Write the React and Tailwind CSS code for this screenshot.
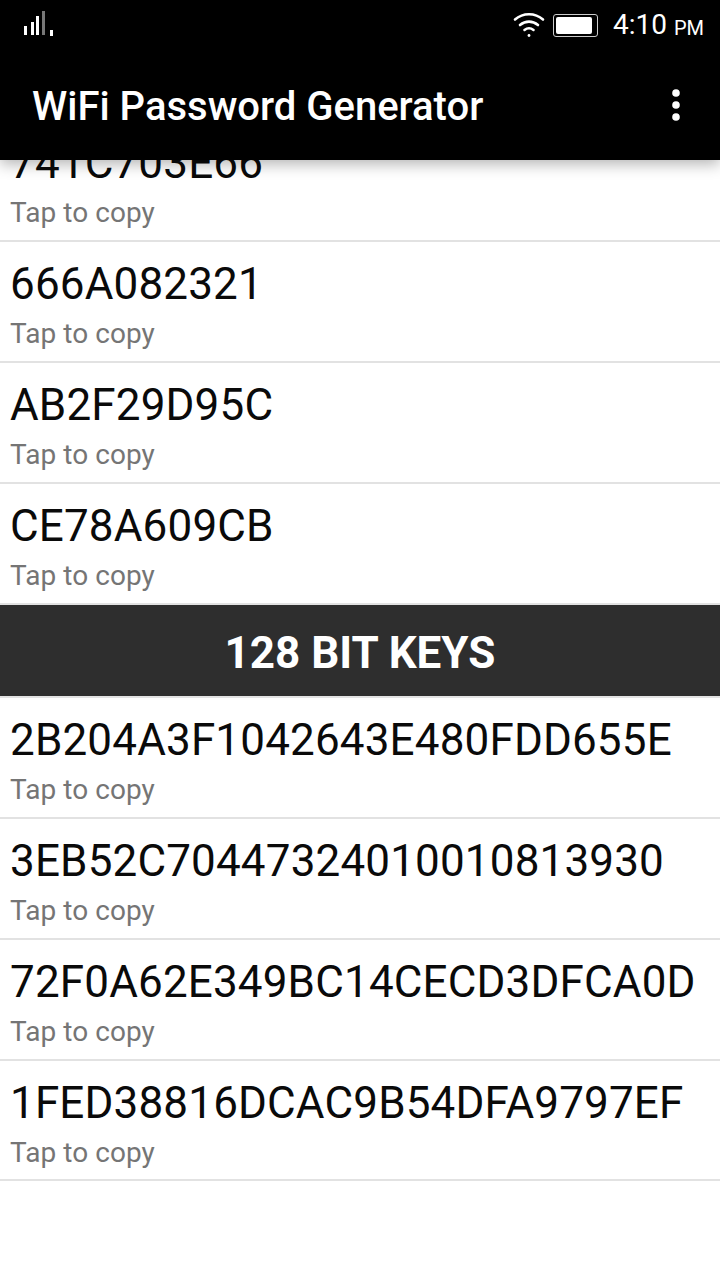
import React from "react";

const topKeys = ["741C703E66", "666A082321", "AB2F29D95C", "CE78A609CB"];
const bottomKeys = [
  "2B204A3F1042643E480FDD655E",
  "3EB52C70447324010010813930",
  "72F0A62E349BC14CECD3DFCA0D",
  "1FED38816DCAC9B54DFA9797EF",
];

const KeyRow = ({ value }) => (
  <div className="h-[121px] last:h-[120px] border-b-2 border-[#e2e2e2] pl-[10px] pt-[16px]">
    <p className="text-[44px] tracking-[0.16px] leading-[52px] text-[#0a0a0a]">{value}</p>
    <p className="text-[28px] tracking-[0.05px] leading-[36px] mt-[6px] text-[#757575]">Tap to copy</p>
  </div>
);

const SignalIcon = () => (
  <svg width="34" height="28" viewBox="0 0 34 28" fill="none">
    <rect x="2" y="15" width="3" height="9" fill="#fff" />
    <rect x="9" y="11" width="3" height="13" fill="#fff" />
    <rect x="14" y="5" width="3" height="19" fill="#fff" />
    <rect x="20" y="-2" width="3" height="26" fill="#777" />
    <rect x="28" y="19" width="3" height="6" fill="#fff" />
  </svg>
);

const WifiIcon = () => (
  <svg width="32" height="26" viewBox="0 0 32 26" fill="none" stroke="#fff" strokeWidth="2.6" strokeLinecap="round">
    <path d="M2 7.5C10 .5 22 .5 30 7.5" />
    <path d="M7 13c5.500-4.500 12.500-4.500 18 0" />
    <path d="M11.500 18c3-2.300 6-2.300 9 0" />
    <circle cx="16" cy="23.500" r="1.400" fill="#fff" stroke="none" />
  </svg>
);

const BatteryIcon = () => (
  <div className="w-[45px] h-[23px] rounded-[3px] border border-[#ccc] p-[2px] flex">
    <div className="flex-1 bg-white rounded-[2px] mr-[3px]" />
  </div>
);

const DotsIcon = () => (
  <svg width="10" height="34" viewBox="0 0 10 34" fill="#fff">
    <circle cx="5" cy="5" r="3.800" />
    <circle cx="5" cy="17" r="3.800" />
    <circle cx="5" cy="29" r="3.800" />
  </svg>
);

export default function App() {
  return (
    <div className="h-[1280px] overflow-hidden bg-white font-['Roboto',sans-serif] flex flex-col">
      <header className="relative z-10 h-[160px] shrink-0 bg-black text-white shadow-[0_4px_14px_rgba(0,0,0,0.3)]">
        <div className="h-[50px] flex items-center justify-between pl-[22px] pr-[16px]">
          <SignalIcon />
          <div className="flex items-center">
            <WifiIcon />
            <div className="ml-[8px]">
              <BatteryIcon />
            </div>
            <span className="ml-[15px] text-[28px] font-normal leading-none">4:10</span>
            <span className="ml-[7px] mt-[5px] text-[20px] font-normal leading-none">PM</span>
          </div>
        </div>
        <div className="h-[110px] flex items-center justify-between pl-[32px] pr-[39px]">
          <h1 className="text-[40px] font-medium leading-none mt-[4px]">WiFi Password Generator</h1>
          <DotsIcon />
        </div>
      </header>
      <main className="-mt-[39px]">
        {topKeys.map((k) => (
          <KeyRow key={k} value={k} />
        ))}
        <div className="h-[91px] bg-[#2e2e2e] flex items-center justify-center border-b-2 border-[#e2e2e2] box-content">
          <span className="text-[44px] font-bold text-white leading-none mt-[4px]">128 BIT KEYS</span>
        </div>
        {bottomKeys.map((k) => (
          <KeyRow key={k} value={k} />
        ))}
      </main>
    </div>
  );
}
